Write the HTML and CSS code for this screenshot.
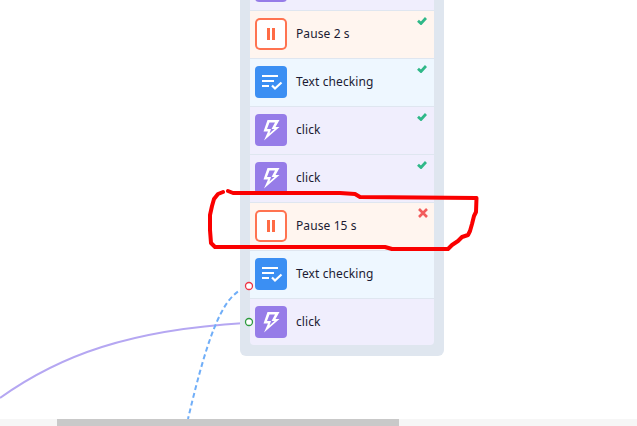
FILE: index.html
```html
<!DOCTYPE html>
<html>
    <head>
        <meta charset="utf-8">
        <title>Flow</title>
        <link rel="stylesheet" href="styles.css">
    </head>
    <body>
        <svg class="defs" width="0" height="0">
            <symbol id="ic-pause" viewBox="0 0 32 32">
                <rect x="12" y="10" width="3" height="12" fill="#ff6b45"/>
                <rect x="17" y="10" width="3" height="12" fill="#ff6b45"/>
            </symbol>
            <symbol id="ic-text" viewBox="0 0 32 32">
                <path d="M7 10h16M7 15h12M7 20h7" stroke="#fff" stroke-width="2" fill="none"/>
                <path d="M17 19.500l3 3 6.500-6" stroke="#fff" stroke-width="2.200" fill="none"/>
            </symbol>
            <symbol id="ic-bolt" viewBox="0 0 32 32">
                <path fill="#fff" fill-rule="evenodd" d="M12.500 6H24.500L20.500 13H24.500L9 26.500L13 17.500H8.500ZM14.500 8.500L12 15H16L14.500 19.500L19.500 15H16.500L20 8.500Z"/>
            </symbol>
            <symbol id="ic-ok" viewBox="0 0 10 8">
                <path d="M1 3.800l3 2.700 5-5.500" stroke="#2fb888" stroke-width="2.800" fill="none"/>
            </symbol>
            <symbol id="ic-fail" viewBox="0 0 10 10">
                <path d="M1 1l8 8M9 1l-8 8" stroke="#f25c5c" stroke-width="2.600" fill="none"/>
            </symbol>
        </svg>

        <div class="canvas">
            <svg class="edges" width="637" height="419">
                <path class="edge edge_purple" d="M245 323C130 330 60 355 0 398"/>
                <path class="edge edge_blue" d="M245 288C225 295 210 325 188 419"/>
            </svg>

            <div class="node">
                <div class="row row_click">
                    <div class="icon icon_click"><svg width="32" height="32"><use href="#ic-bolt"/></svg></div>
                </div>
                <div class="row row_pause">
                    <div class="icon icon_pause"><svg width="32" height="32"><use href="#ic-pause"/></svg></div>
                    <span class="label">Pause 2 s</span>
                    <svg class="status status_ok" width="10" height="8"><use href="#ic-ok"/></svg>
                </div>
                <div class="row row_text">
                    <div class="icon icon_text"><svg width="32" height="32"><use href="#ic-text"/></svg></div>
                    <span class="label">Text checking</span>
                    <svg class="status status_ok" width="10" height="8"><use href="#ic-ok"/></svg>
                </div>
                <div class="row row_click">
                    <div class="icon icon_click"><svg width="32" height="32"><use href="#ic-bolt"/></svg></div>
                    <span class="label">click</span>
                    <svg class="status status_ok" width="10" height="8"><use href="#ic-ok"/></svg>
                </div>
                <div class="row row_click">
                    <div class="icon icon_click"><svg width="32" height="32"><use href="#ic-bolt"/></svg></div>
                    <span class="label">click</span>
                    <svg class="status status_ok" width="10" height="8"><use href="#ic-ok"/></svg>
                </div>
                <div class="row row_pause">
                    <div class="icon icon_pause"><svg width="32" height="32"><use href="#ic-pause"/></svg></div>
                    <span class="label">Pause 15 s</span>
                    <svg class="status status_fail" width="10" height="10"><use href="#ic-fail"/></svg>
                </div>
                <div class="row row_text">
                    <div class="icon icon_text"><svg width="32" height="32"><use href="#ic-text"/></svg></div>
                    <span class="label">Text checking</span>
                </div>
                <div class="row row_click row_last">
                    <div class="icon icon_click"><svg width="32" height="32"><use href="#ic-bolt"/></svg></div>
                    <span class="label">click</span>
                </div>
            </div>

            <svg class="marks" width="637" height="419">
                <circle class="port port_fail" cx="249" cy="286" r="3.500"/>
                <circle class="port port_ok" cx="249" cy="322" r="3.500"/>
                <path class="scribble" d="M223 192L218 194L214 199L212 206L210 215L210 230L211 243L215 247L300 247L385 247L392 249L420 249L448 249L452 245L458 241L462 237L468 235L470 231L472 224L474 216L476 212L476.500 198L360 197L355 194L340 193L233 193L228 191"/>
            </svg>
        </div>

        <div class="scrollbar">
            <div class="scrollbar_thumb"></div>
        </div>
    </body>
</html>
```

FILE: styles.css
```css
html, body
{
    margin:0;
    height:100%;
    overflow:hidden;
    background:#fff;
}
body
{
    display:flex;
    flex-direction:column;
    color:#1b1b33;
    font-family:"Noto Sans","Open Sans",sans-serif;
    font-size:12px;
    letter-spacing:.1px;
}
.defs
{
    display:none;
}
.canvas
{
    position:relative;
    flex:1;
    overflow:hidden;
}
.edges, .marks
{
    position:absolute;
    left:0;
    top:0;
}
.marks
{
    z-index:2;
}
.edge
{
    fill:none;
    stroke-width:2;
}
.edge_purple
{
    stroke:#b5a7f2;
}
.edge_blue
{
    stroke:#70aef8;
    stroke-dasharray:5 3;
}
.port
{
    fill:#fff;
    stroke-width:1.300;
}
.port_fail
{
    stroke:#ee3344;
}
.port_ok
{
    stroke:#2e9b3e;
}
.scribble
{
    fill:none;
    stroke:#fa0000;
    stroke-width:4;
    stroke-linejoin:round;
    stroke-linecap:round;
}

/* diagram node */
.node
{
    position:absolute;
    left:240px;
    top:-37px;
    width:184px;
    padding:0 10px 11px;
    background:#dfe6ef;
    border-radius:0 0 6px 6px;
}
.row
{
    position:relative;
    display:flex;
    align-items:center;
    gap:9px;
    box-sizing:border-box;
    height:48px;
    padding:0 0 1px 5px;
    border-bottom:1px solid #dfe6f0;
}
.row_last
{
    height:46px;
    padding-bottom:0;
    border-bottom:0;
    border-radius:0 0 4px 4px;
}
.row_click
{
    background:#f0eefd;
}
.row_pause
{
    background:#fff5ef;
}
.row_text
{
    background:#eef7ff;
}
.label
{
    margin-bottom:2px;
}
.icon
{
    flex:none;
    box-sizing:border-box;
    width:32px;
    height:32px;
    border-radius:4px;
}
.icon svg
{
    display:block;
}
.icon_click
{
    background:#967ce8;
}
.icon_text
{
    background:#3b8ff3;
}
.icon_pause
{
    background:#fff;
    box-shadow:inset 0 0 0 2px #ff7350;
    border-radius:5px;
}
.status
{
    position:absolute;
    right:7px;
    top:6px;
}
.status_fail
{
    right:6px;
    top:5px;
}

.scrollbar
{
    flex:none;
    height:7px;
    background:#f6f6f6;
    padding-left:57px;
}
.scrollbar_thumb
{
    width:342px;
    height:100%;
    background:#c9c9c9;
}
```
